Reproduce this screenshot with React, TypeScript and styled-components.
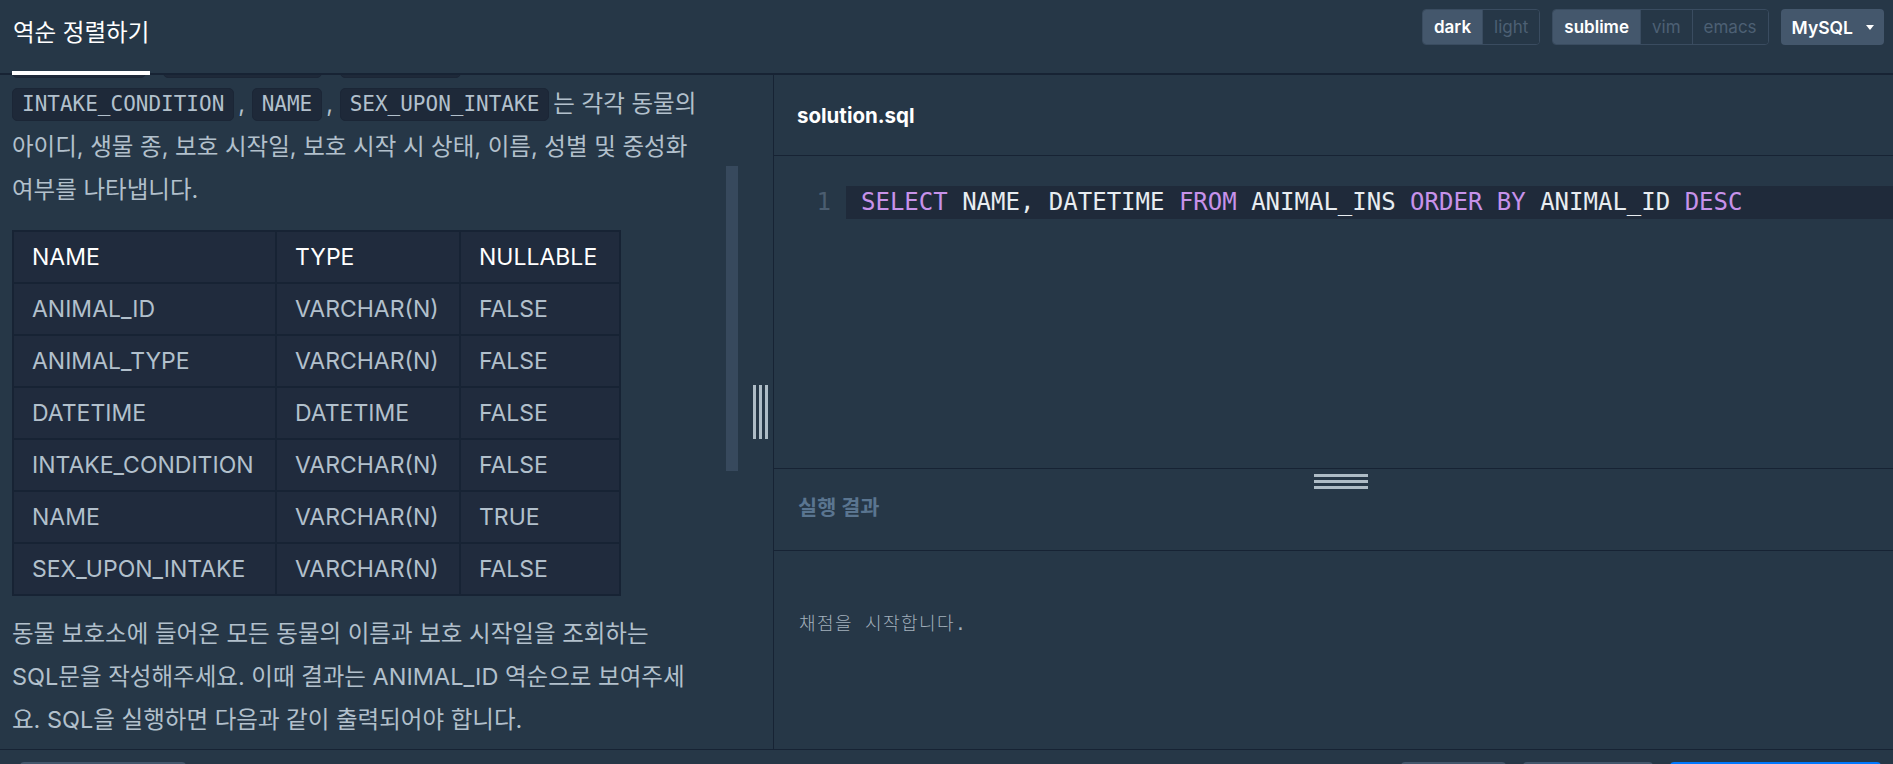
import React, { useLayoutEffect, useRef } from 'react';
import styled, { createGlobalStyle } from 'styled-components';

const sans = `Inter, "Noto Sans CJK KR", sans-serif`;
const mono = `"DejaVu Sans Mono", "Noto Sans CJK KR", monospace`;

const GlobalStyle = createGlobalStyle`
  * { box-sizing: border-box; }
  html, body {
    margin: 0;
    padding: 0;
    height: 100%;
    overflow: hidden;
    background: #263747;
  }
  #root { height: 100%; }
`;

const Page = styled.div`
  display: flex;
  flex-direction: column;
  height: 100vh;
  overflow: hidden;
  background: #263747;
  color: #b2c0cc;
  font-family: ${sans};
`;

/* ---------- top bar ---------- */

const TopBar = styled.header`
  display: flex;
  align-items: stretch;
  justify-content: space-between;
  height: 75px;
  flex-shrink: 0;
  padding: 0 9px 0 12px;
  border-bottom: 2px solid #172334;
`;

const TitleTab = styled.div`
  display: flex;
  align-items: center;
  padding: 0 1px 9px;
  margin-bottom: -2px;
  border-bottom: 4px solid #ffffff;
  color: #ffffff;
  font-size: 23.5px;
  position: relative;
  z-index: 2;
`;

const Controls = styled.div`
  display: flex;
  align-items: flex-start;
  gap: 12px;
  padding-top: 9px;
`;

const Segmented = styled.div`
  display: flex;
  height: 36px;
  border: 1px solid #3a4c60;
  border-radius: 4px;
  overflow: hidden;
`;

const Segment = styled.button<{ $active?: boolean }>`
  display: flex;
  align-items: center;
  padding: 0 11px;
  border: none;
  border-left: ${(p) => (p.$active ? 'none' : '1px solid #3a4c60')};
  background: ${(p) => (p.$active ? '#44576c' : '#263747')};
  color: ${(p) => (p.$active ? '#ffffff' : '#4d6074')};
  font-family: ${sans};
  font-size: 17px;
  font-weight: ${(p) => (p.$active ? 600 : 400)};
  cursor: pointer;

  &:first-child {
    border-left: none;
  }
`;

const LangSelect = styled.button`
  display: flex;
  align-items: center;
  gap: 13px;
  height: 36px;
  padding: 0 10px 0 11px;
  border: none;
  border-radius: 4px;
  background: #44576c;
  color: #ffffff;
  font-family: ${sans};
  font-size: 17.5px;
  font-weight: 600;
`;

const Caret = styled.span`
  width: 0;
  height: 0;
  border-left: 4px solid transparent;
  border-right: 4px solid transparent;
  border-top: 5px solid #ffffff;
`;

/* ---------- workspace ---------- */

const Workspace = styled.div`
  display: flex;
  height: 674px;
  flex-shrink: 0;
`;

const DescPanel = styled.section`
  position: relative;
  display: flex;
  width: 774px;
  flex-shrink: 0;
  border-right: 1px solid #172334;
`;

const ScrollArea = styled.div`
  position: relative;
  flex: 1;
  overflow-y: scroll;
  padding: 0 12px;
  scrollbar-width: none;

  &::-webkit-scrollbar {
    display: none;
  }
`;

const ScrollThumb = styled.div`
  position: absolute;
  left: 726px;
  top: 91px;
  width: 12px;
  height: 305px;
  background: #37495d;
`;

const Gutter = styled.div`
  display: flex;
  align-items: center;
  width: 29px;
  padding-left: 9px;
`;

const VHandle = styled.div`
  display: flex;
  gap: 3px;
  height: 54px;

  span {
    width: 3px;
    height: 100%;
    background: #aebcc6;
  }
`;

const SectionTitle = styled.h5`
  margin: 24px 0 12px;
  color: #ffffff;
  font-size: 23.5px;
  font-weight: 700;
  line-height: 43px;
`;

const Para = styled.div`
  font-size: 23.5px;
  line-height: 43px;
  color: #b2c0cc;
`;

const Line = styled.div`
  white-space: nowrap;
`;

const Chip = styled.code`
  display: inline-block;
  margin-right: 4px;
  padding: 0 9px;
  border: 1px solid #1b2636;
  border-radius: 5px;
  background: #1e2939;
  color: #b2c0cc;
  font-family: ${mono};
  font-size: 21px;
  line-height: 31px;
  vertical-align: 1px;
`;

const Table = styled.table`
  width: 607px;
  margin: 19px 0 16px;
  border-collapse: collapse;
  table-layout: fixed;
  background: #202b3d;
  font-size: 23px;
`;

const Th = styled.th<{ $w?: number }>`
  width: ${(p) => (p.$w ? `${p.$w}px` : 'auto')};
  height: 52px;
  padding: 0 18px;
  border: 2px solid #172334;
  color: #ffffff;
  font-weight: 400;
  text-align: left;
`;

const Td = styled.td`
  height: 52px;
  padding: 0 18px;
  border: 2px solid #172334;
  color: #b2c0cc;
  white-space: nowrap;
`;

/* ---------- editor side ---------- */

const EditorPanel = styled.section`
  display: flex;
  flex-direction: column;
  flex: 1;
  min-width: 0;
`;

const FileBar = styled.div`
  display: flex;
  align-items: center;
  height: 81px;
  flex-shrink: 0;
  padding-left: 23px;
  border-bottom: 1px solid #172334;
  color: #ffffff;
  font-size: 20.5px;
  font-weight: 700;
`;

const EditorBody = styled.div`
  height: 313px;
  flex-shrink: 0;
  padding-top: 30px;
  border-bottom: 1px solid #172334;
`;

const CodeRow = styled.div`
  display: flex;
  height: 33px;
  font-family: ${mono};
  font-size: 24px;
  line-height: 33px;
`;

const LineNo = styled.div`
  width: 72px;
  padding-right: 15px;
  text-align: right;
  color: #4b5d70;
`;

const CodeLine = styled.div`
  flex: 1;
  padding-left: 15px;
  background: #1f2a3a;
  color: #e8edf1;
  white-space: pre;
`;

const Kw = styled.span`
  color: #c792ea;
`;

const ResultBar = styled.div`
  position: relative;
  display: flex;
  align-items: center;
  height: 82px;
  flex-shrink: 0;
  padding: 0 0 7px 24px;
  border-bottom: 1px solid #172334;
  color: #5a7590;
  font-size: 20.8px;
  font-weight: 700;
`;

const HHandle = styled.div`
  position: absolute;
  top: 5px;
  left: 540px;
  display: flex;
  flex-direction: column;
  gap: 3px;
  width: 54px;

  span {
    height: 3px;
    background: #aebcc6;
  }
`;

const Output = styled.pre`
  flex: 1;
  margin: 0;
  padding: 61px 25px 0;
  color: #a3b0bc;
  font-family: ${mono};
  font-size: 18px;
  font-weight: 300;
  letter-spacing: 1.4px;
  line-height: 24px;
`;

/* ---------- footer ---------- */

const Footer = styled.footer`
  display: flex;
  justify-content: space-between;
  height: 70px;
  flex-shrink: 0;
  padding: 12px 12px 0 20px;
  border-top: 1px solid #172334;
`;

const FooterGroup = styled.div`
  display: flex;
  gap: 17px;
`;

const FooterButton = styled.button<{ $w: number; $primary?: boolean }>`
  width: ${(p) => p.$w}px;
  height: 44px;
  border: none;
  border-radius: 4px;
  background: ${(p) => (p.$primary ? '#0078ff' : '#44576c')};
  color: #ffffff;
  font-family: ${sans};
  font-size: 18px;
  font-weight: 600;
`;

const columns = [
  { name: 'ANIMAL_ID', type: 'VARCHAR(N)', nullable: 'FALSE' },
  { name: 'ANIMAL_TYPE', type: 'VARCHAR(N)', nullable: 'FALSE' },
  { name: 'DATETIME', type: 'DATETIME', nullable: 'FALSE' },
  { name: 'INTAKE_CONDITION', type: 'VARCHAR(N)', nullable: 'FALSE' },
  { name: 'NAME', type: 'VARCHAR(N)', nullable: 'TRUE' },
  { name: 'SEX_UPON_INTAKE', type: 'VARCHAR(N)', nullable: 'FALSE' },
];

const sample = [
  ['A349996', 'Sugar', '2018-01-22 14:32:00'],
  ['A350276', 'Jewel', '2017-08-13 13:50:00'],
  ['A350375', 'Meo', '2017-03-06 15:01:00'],
  ['A352555', 'Harley', '2014-08-08 04:20:00'],
  ['A352713', 'Gia', '2017-04-13 16:29:00'],
];

export default function App() {
  const scrollRef = useRef<HTMLDivElement>(null);
  const anchorRef = useRef<HTMLDivElement>(null);

  // the description is shown scrolled down a little
  useLayoutEffect(() => {
    if (scrollRef.current && anchorRef.current) {
      scrollRef.current.scrollTop = anchorRef.current.offsetTop - 7.5;
    }
  }, []);

  return (
    <>
      <GlobalStyle />
      <Page>
        <TopBar>
          <TitleTab>역순 정렬하기</TitleTab>
          <Controls>
            <Segmented>
              <Segment $active>dark</Segment>
              <Segment>light</Segment>
            </Segmented>
            <Segmented>
              <Segment $active>sublime</Segment>
              <Segment>vim</Segment>
              <Segment>emacs</Segment>
            </Segmented>
            <LangSelect>
              MySQL
              <Caret />
            </LangSelect>
          </Controls>
        </TopBar>

        <Workspace>
          <DescPanel>
            <ScrollArea ref={scrollRef}>
              <SectionTitle>문제 설명</SectionTitle>
              <Para>
                <Line>
                  <Chip>ANIMAL_INS</Chip> 테이블은 동물 보호소에 들어온 동물의 정보를 담은
                </Line>
                <Line>
                  테이블입니다. <Chip>ANIMAL_INS</Chip> 테이블 구조는 다음과 같으며,
                </Line>
                <Line>
                  <Chip>ANIMAL_ID</Chip>, <Chip>ANIMAL_TYPE</Chip>, <Chip>DATETIME</Chip>,
                </Line>
                <Line ref={anchorRef}>
                  <Chip>INTAKE_CONDITION</Chip>, <Chip>NAME</Chip>, <Chip>SEX_UPON_INTAKE</Chip>는 각각 동물의
                </Line>
                <Line>아이디, 생물 종, 보호 시작일, 보호 시작 시 상태, 이름, 성별 및 중성화</Line>
                <Line>여부를 나타냅니다.</Line>
              </Para>

              <Table>
                <thead>
                  <tr>
                    <Th $w={263}>NAME</Th>
                    <Th $w={184}>TYPE</Th>
                    <Th $w={160}>NULLABLE</Th>
                  </tr>
                </thead>
                <tbody>
                  {columns.map((c) => (
                    <tr key={c.name}>
                      <Td>{c.name}</Td>
                      <Td>{c.type}</Td>
                      <Td>{c.nullable}</Td>
                    </tr>
                  ))}
                </tbody>
              </Table>

              <Para>
                <Line>동물 보호소에 들어온 모든 동물의 이름과 보호 시작일을 조회하는</Line>
                <Line>SQL문을 작성해주세요. 이때 결과는 ANIMAL_ID 역순으로 보여주세</Line>
                <Line>요. SQL을 실행하면 다음과 같이 출력되어야 합니다.</Line>
              </Para>

              <Table>
                <thead>
                  <tr>
                    <Th $w={180}>ANIMAL_ID</Th>
                    <Th $w={150}>NAME</Th>
                    <Th>DATETIME</Th>
                  </tr>
                </thead>
                <tbody>
                  {sample.map((r) => (
                    <tr key={r[0]}>
                      <Td>{r[0]}</Td>
                      <Td>{r[1]}</Td>
                      <Td>{r[2]}</Td>
                    </tr>
                  ))}
                </tbody>
              </Table>
            </ScrollArea>
            <ScrollThumb />
            <Gutter>
              <VHandle>
                <span />
                <span />
                <span />
              </VHandle>
            </Gutter>
          </DescPanel>

          <EditorPanel>
            <FileBar>solution.sql</FileBar>
            <EditorBody>
              <CodeRow>
                <LineNo>1</LineNo>
                <CodeLine>
                  <Kw>SELECT</Kw> NAME, DATETIME <Kw>FROM</Kw> ANIMAL_INS <Kw>ORDER</Kw> <Kw>BY</Kw> ANIMAL_ID <Kw>DESC</Kw>
                </CodeLine>
              </CodeRow>
            </EditorBody>
            <ResultBar>
              실행 결과
              <HHandle>
                <span />
                <span />
                <span />
              </HHandle>
            </ResultBar>
            <Output>채점을 시작합니다.</Output>
          </EditorPanel>
        </Workspace>

        <Footer>
          <FooterGroup>
            <FooterButton $w={166}>질문하기 (12)</FooterButton>
          </FooterGroup>
          <FooterGroup>
            <FooterButton $w={105}>초기화</FooterButton>
            <FooterButton $w={130}>코드 실행</FooterButton>
            <FooterButton $w={211} $primary>
              제출 후 채점하기
            </FooterButton>
          </FooterGroup>
        </Footer>
      </Page>
    </>
  );
}
